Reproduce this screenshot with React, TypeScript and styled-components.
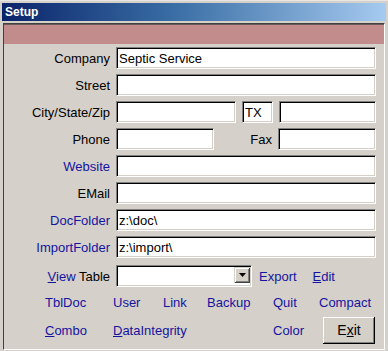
import React from "react";
import styled, { createGlobalStyle } from "styled-components";

const GlobalStyle = createGlobalStyle`
  html, body {
    margin: 0;
    padding: 0;
    background: #d4d0c8;
  }
  * {
    box-sizing: border-box;
  }
`;

const Window = styled.div`
  width: 388px;
  height: 351px;
  padding: 2px 1px 1px 2px;
  background: #d5d0ca;
  font-family: "Liberation Sans", Arial, sans-serif;
  font-size: 13px;
  display: flex;
  flex-direction: column;
  border-top: 1px solid #e8e6e2;
`;

const TitleBar = styled.div`
  height: 18px;
  width: 384px;
  background: linear-gradient(90deg, #0a246a 0%, #3a6ea5 45%, #a6caf0 100%);
  color: #fff;
  font-weight: bold;
  font-size: 12px;
  display: flex;
  align-items: center;
  padding-left: 3px;
`;

const Client = styled.div`
  margin-top: 2px;
  margin-left: 1px;
  width: 382px;
  height: 327px;
  border-top: 1px solid #404040;
  border-left: 1px solid #404040;
  border-right: 1px solid #ffffff;
  border-bottom: 1px solid #ffffff;
  display: flex;
  flex-direction: column;
`;

const Band = styled.div`
  height: 20px;
  background: #c38c8c;
  border-top: 1px solid #6e5a5a;
`;

const Form = styled.div`
  padding-top: 3px;
  display: flex;
  flex-direction: column;
  gap: 5px;
`;

const Row = styled.div`
  display: flex;
  align-items: center;
  height: 22px;
`;

const Label = styled.div<{ $link?: boolean; $width?: number }>`
  width: ${(p) => p.$width ?? 112}px;
  padding-right: 6px;
  text-align: right;
  color: ${(p) => (p.$link ? "#1414a0" : "#000")};
  white-space: nowrap;
`;

const Field = styled.div<{ $w: number; $ml?: number }>`
  width: ${(p) => p.$w}px;
  margin-left: ${(p) => p.$ml ?? 0}px;
  height: 22px;
  background: #fff;
  border-top: 1px solid #808080;
  border-left: 1px solid #808080;
  border-right: 1px solid #ffffff;
  border-bottom: 1px solid #ffffff;
  box-shadow: inset 1px 1px 0 #000, inset -1px -1px 0 #d4d0c8;
  padding: 2px 3px 0 2px;
  line-height: 17px;
  color: #000;
  white-space: nowrap;
  overflow: hidden;
  position: relative;
`;

const DropButton = styled.div`
  position: absolute;
  right: 1px;
  top: 1px;
  width: 16px;
  height: 16px;
  background: #d4d0c8;
  box-shadow: inset 1px 1px 0 #d4d0c8, inset -1px -1px 0 #404040,
    inset 2px 2px 0 #ffffff, inset -2px -2px 0 #808080;
  display: flex;
  align-items: center;
  justify-content: center;
`;

const Link = styled.span<{ $ml?: number }>`
  color: #1414a0;
  margin-left: ${(p) => p.$ml ?? 0}px;
  white-space: nowrap;
`;

const U = styled.span`
  text-decoration: underline;
`;

const Plain = styled.span`
  color: #000;
`;

const Grid = styled.div`
  display: grid;
  grid-template-columns: 68px 50px 44px 66px 46px auto;
  padding-left: 41px;
  align-items: center;
`;

const LinkRow = styled(Grid)`
  margin-top: 4px;
  height: 22px;
`;

const LastRow = styled(Grid)`
  margin-top: 4px;
  height: 26px;
`;

const Cell = styled.div<{ $span?: number }>`
  color: #1414a0;
  white-space: nowrap;
  grid-column: span ${(p) => p.$span ?? 1};
`;

const ExitButton = styled.div`
  margin-left: 4px;
  width: 52px;
  height: 27px;
  background: #d4d0c8;
  box-shadow: inset -1px -1px 0 #000, inset 1px 1px 0 #ffffff,
    inset -2px -2px 0 #808080, inset 2px 2px 0 #d4d0c8;
  display: flex;
  align-items: center;
  justify-content: center;
  font-size: 14px;
  color: #000;
  padding-bottom: 1px;
`;

export default function App() {
  return (
    <>
      <GlobalStyle />
      <Window>
        <TitleBar>Setup</TitleBar>
        <Client>
          <Band />
          <Form>
            <Row>
              <Label>Company</Label>
              <Field $w={260}>Septic Service</Field>
            </Row>
            <Row>
              <Label>Street</Label>
              <Field $w={260} />
            </Row>
            <Row>
              <Label>City/State/Zip</Label>
              <Field $w={120} />
              <Field $w={31} $ml={6}>TX</Field>
              <Field $w={97} $ml={6} />
            </Row>
            <Row>
              <Label>Phone</Label>
              <Field $w={98} />
              <Label $width={64}>Fax</Label>
              <Field $w={98} />
            </Row>
            <Row>
              <Label $link>Website</Label>
              <Field $w={260} />
            </Row>
            <Row>
              <Label>EMail</Label>
              <Field $w={260} />
            </Row>
            <Row>
              <Label $link>DocFolder</Label>
              <Field $w={260}>z:\doc\</Field>
            </Row>
            <Row>
              <Label $link>ImportFolder</Label>
              <Field $w={260}>z:\import\</Field>
            </Row>
            <Row style={{ marginTop: 2 }}>
              <Label $link>
                <U>V</U>iew <Plain>Table</Plain>
              </Label>
              <Field $w={136}>
                <DropButton>
                  <svg width="7" height="4" viewBox="0 0 7 4">
                    <path d="M0 0h7L3.5 4z" fill="#000" />
                  </svg>
                </DropButton>
              </Field>
              <Link $ml={7}>Export</Link>
              <Link $ml={16}>
                <U>E</U>dit
              </Link>
            </Row>
          </Form>
          <LinkRow>
            <Cell>TblDoc</Cell>
            <Cell>User</Cell>
            <Cell>Link</Cell>
            <Cell>Backup</Cell>
            <Cell>Quit</Cell>
            <Cell>Compact</Cell>
          </LinkRow>
          <LastRow>
            <Cell>
              <U>C</U>ombo
            </Cell>
            <Cell $span={3}>
              <U>D</U>ataIntegrity
            </Cell>
            <Cell>Color</Cell>
            <ExitButton>
              E<U>x</U>it
            </ExitButton>
          </LastRow>
        </Client>
      </Window>
    </>
  );
}
